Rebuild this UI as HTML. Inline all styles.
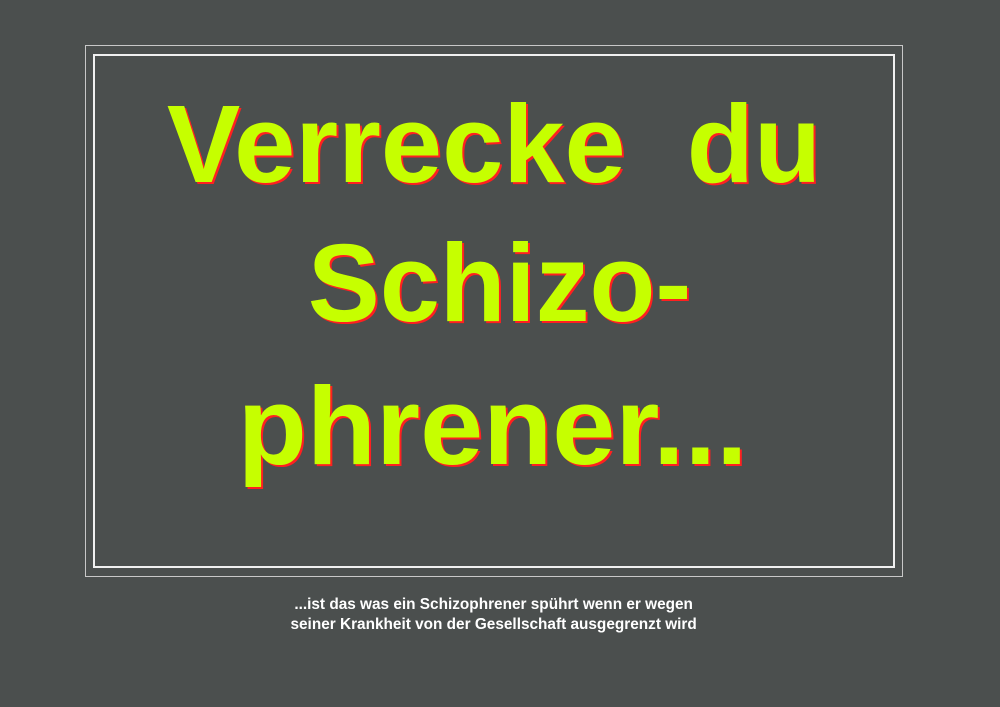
<!DOCTYPE html>
<html><head><meta charset="utf-8"><style>
html,body{margin:0;padding:0}
body{width:1000px;height:707px;background:#4b4f4e;position:relative;overflow:hidden;font-family:"Liberation Sans",sans-serif}
.o{position:absolute;left:85px;top:45px;width:816px;height:530px;border:1px solid #c8c8c8}
.i{position:absolute;left:93px;top:54px;width:798px;height:510px;border:2px solid #f0f0f0}
.t{position:absolute;left:0;width:1000px;text-align:center;color:#c6ff00;font-weight:bold;font-size:110px;line-height:1;white-space:pre;text-shadow:2px 2px 0 #ff2020}
.t span{display:inline-block;transform-origin:center}
.s{position:absolute;left:0;width:988px;text-align:center;color:#fff;font-weight:bold;font-size:16px;line-height:20px}
.s span{display:inline-block;transform:scaleX(0.96)}
</style></head><body>
<div class="o"></div><div class="i"></div>
<div class="t" style="top:90px;left:-6px"><span>Verrecke  du</span></div>
<div class="t" style="top:229px"><span style="transform:scaleX(0.98)">Schizo-</span></div>
<div class="t" style="top:372px;left:-7px"><span style="transform:scaleX(1.03)">phrener...</span></div>
<div class="s" style="top:595px"><span>...ist das was ein Schizophrener spührt wenn er wegen<br>seiner Krankheit von der Gesellschaft ausgegrenzt wird</span></div>
</body></html>
